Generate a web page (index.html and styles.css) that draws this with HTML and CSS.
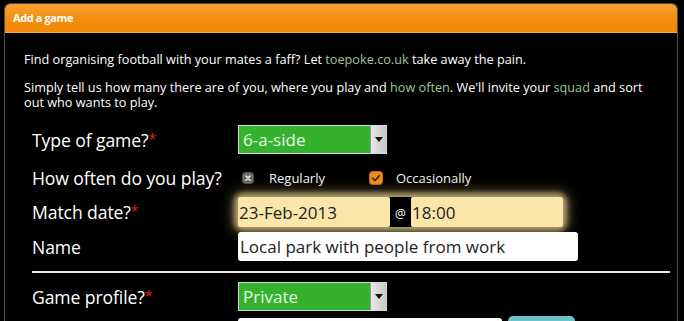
FILE: index.html
```html
<!DOCTYPE html>
<html>
<head>
<meta charset="utf-8">
<link rel="stylesheet" href="styles.css">
</head>
<body>
<div class="panel">
  <div class="panel-head">Add a game</div>
  <div class="panel-body">
    <p class="intro">Find organising football with your mates a faff? Let <a href="#">toepoke.co.uk</a> take away the pain.</p>
    <p class="intro">Simply tell us how many there are of you, where you play and <a href="#">how often</a>. We'll invite your <a href="#">squad</a> and sort out who wants to play.</p>
    <div class="form">
      <div class="row row-type">
        <label class="lbl">Type of game?<span class="req">*</span></label>
        <div class="select"><span class="sel-text">6-a-side</span><span class="sel-btn"><svg width="8" height="5" viewBox="0 0 8 5"><path d="M0 0h8L4 5z" fill="#111"/></svg></span></div>
      </div>
      <div class="row row-often">
        <label class="lbl">How often do you play?</label>
        <div class="checks">
          <span class="chk chk-off"><svg width="12" height="12" viewBox="0 0 12 12"><rect x="0.5" y="0.5" width="11" height="11" rx="3" fill="#6a6a6a" stroke="#555"/><path d="M4 4l4 4M8 4l-4 4" stroke="#eee" stroke-width="1.6" stroke-linecap="round"/></svg></span>
          <span class="chk-lbl chk-lbl1">Regularly</span>
          <span class="chk chk-on"><svg width="14" height="14" viewBox="0 0 14 14"><rect x="0.5" y="0.5" width="13" height="13" rx="3" fill="#ef8a1e" stroke="#c86a08"/><path d="M3.8 7.2l2.3 2.3 4.2-4.8" stroke="#3a2000" stroke-width="1.6" fill="none" stroke-linecap="round"/></svg></span>
          <span class="chk-lbl chk-lbl2">Occasionally</span>
        </div>
      </div>
      <div class="row row-date">
        <label class="lbl">Match date?<span class="req">*</span></label>
        <div class="date-group">
          <div class="inp inp-date">23-Feb-2013</div>
          <span class="at">@</span>
          <div class="inp inp-time">18:00</div>
        </div>
      </div>
      <div class="row row-name">
        <label class="lbl">Name</label>
        <div class="inp inp-name">Local park with people from work</div>
      </div>
      <hr class="rule">
      <div class="row row-profile">
        <label class="lbl">Game profile?<span class="req">*</span></label>
        <div class="select"><span class="sel-text">Private</span><span class="sel-btn"><svg width="8" height="5" viewBox="0 0 8 5"><path d="M0 0h8L4 5z" fill="#111"/></svg></span></div>
      </div>
      <div class="row row-next">
        <div class="lbl"></div>
        <div class="next">
          <div class="inp inp-next"></div>
          <div class="btn"></div>
        </div>
      </div>
    </div>
  </div>
</div>
</body>
</html>
```

FILE: styles.css
```css
html, body {
  margin: 0;
  padding: 0;
  background: #000;
  height: 100%;
  overflow: hidden;
}
body {
  font-family: "Open Sans", "Noto Sans", sans-serif;
  color: #fff;
  padding: 3px 0 0 4px;
  box-sizing: border-box;
}
.panel {
  width: 672px;
  border: 1px solid #4a4a4a;
  border-bottom: none;
  border-radius: 6px 6px 0 0;
  height: 317px;
  overflow: hidden;
  background: #000;
}
.panel-head {
  height: 28px;
  background: linear-gradient(#f7a032, #f38c0c 60%, #f28a08);
  border-radius: 5px 5px 0 0;
  border-bottom: 1px solid #f5a446;
  font-family: "Open Sans", sans-serif;
  font-weight: 700;
  font-size: 11px;
  letter-spacing: -0.4px;
  line-height: 28px;
  padding-left: 8px;
  color: #fff;
}
.panel-body {
  padding: 19px 0 0 19px;
}
.intro {
  margin: 0 0 13px 0;
  font-size: 12.7px;
  line-height: 15px;
  color: #fff;
  padding-right: 22px;
}
.intro a {
  color: #9fc699;
  text-decoration: none;
}
.form {
  margin-left: 8px;
  margin-top: 15px;
}
.row {
  display: grid;
  grid-template-columns: 206px auto;
  align-items: center;
}
.lbl {
  font-size: 17.6px;
  color: #fff;
  letter-spacing: -0.1px;
}
.req {
  color: #e0201a;
  font-size: 14px;
  vertical-align: 3px;
}
.select {
  width: 147px;
  height: 27px;
  border: 1px solid #d8d8d8;
  background: #34b22e;
  display: flex;
  align-items: stretch;
}
.sel-text {
  flex: 1;
  color: #e6f7e2;
  font-size: 17px;
  line-height: 27px;
  padding-left: 4px;
}
.sel-btn {
  width: 15px;
  background: linear-gradient(90deg, #e8e8e8, #c8c8c8);
  border-left: 1px solid #9a9a9a;
  display: flex;
  align-items: center;
  justify-content: center;
}
.row-type { height: 29px; }
.row-often {
  height: 30px;
  margin-top: 9px;
}
.checks {
  display: flex;
  align-items: center;
  font-size: 13px;
  color: #f4f4f4;
  margin-left: 4px;
}
.chk { display: flex; }
.chk-lbl1 { margin-left: 15px; margin-right: 44px; }
.chk-lbl2 { margin-left: 13px; }
.row-date {
  height: 30px;
  margin-top: 4px;
}
.date-group {
  display: flex;
  align-items: center;
  border-radius: 5px;
  box-shadow: 0 0 5px 4px rgba(205, 190, 125, 0.75), 0 0 12px 7px rgba(160, 145, 90, 0.45);
  width: 325px;
}
.inp {
  background: #fff;
  color: #222;
  font-size: 17px;
  height: 29px;
  line-height: 29px;
  box-sizing: border-box;
  border-radius: 3px;
}
.inp-date, .inp-time {
  background: #f9e6a8;
  width: 152px;
  height: 30px;
  line-height: 31px;
  border-radius: 2px;
}
.inp-date { padding-left: 1px; }
.at {
  width: 21px;
  text-align: center;
  font-size: 12px;
  color: #fff;
  padding-top: 3px;
}
.inp-time { padding-left: 1px; }
.row-name {
  height: 29px;
  margin-top: 5px;
}
.inp-name {
  width: 340px;
  padding-left: 2px;
}
.rule {
  border: none;
  border-top: 2px solid #e8e8e8;
  margin: 10px 0 0 0;
  width: 638px;
}
.row-profile {
  height: 29px;
  margin-top: 9px;
}
.row-next {
  margin-top: 5px;
  height: 30px;
  align-items: start;
}
.next {
  display: flex;
  gap: 6px;
}
.inp-next {
  width: 264px;
  height: 24px;
  margin-top: 2px;
}
.btn {
  width: 67px;
  height: 26px;
  background: #6cc3cc;
  border-radius: 5px;
}
```
